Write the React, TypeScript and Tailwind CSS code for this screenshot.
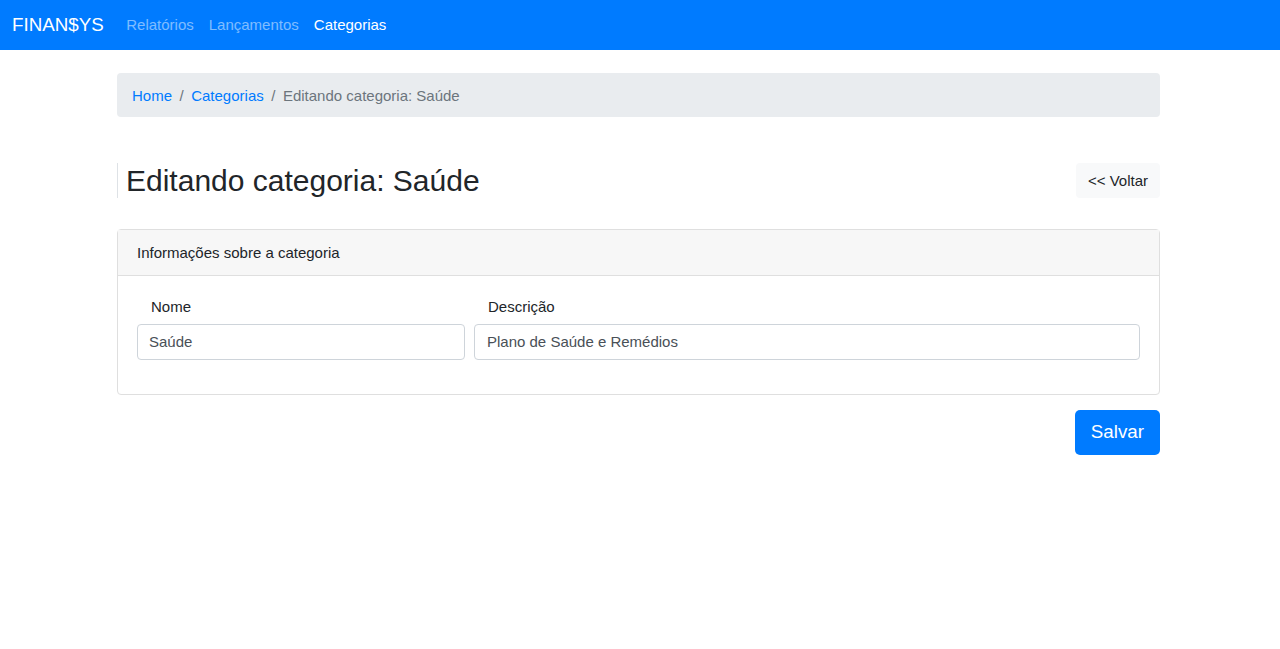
import React from 'react';

export default function App() {
  return (
    <div className="min-h-screen bg-white text-[#212529] text-[15px] leading-[22.5px] font-['Liberation_Sans',Arial,sans-serif]">
      {/* Navbar */}
      <nav className="h-[50px] bg-[#007bff] flex items-center pl-3">
        <span className="text-[18.75px] text-white mr-[15px]">FINAN$YS</span>
        <div className="flex items-center">
          <a className="px-[7.5px] text-white/50">Relatórios</a>
          <a className="px-[7.5px] text-white/50">Lançamentos</a>
          <a className="px-[7.5px] text-white">Categorias</a>
        </div>
      </nav>

      <div className="w-[1043px] ml-[117px]">
        {/* Breadcrumb */}
        <div className="mt-[23px] h-[44px] bg-[#e9ecef] rounded px-[15px] pt-[2px] flex items-center">
          <a className="text-[#007bff]">Home</a>
          <span className="text-[#6c757d] px-[7.5px]">/</span>
          <a className="text-[#007bff]">Categorias</a>
          <span className="text-[#6c757d] px-[7.5px]">/</span>
          <span className="text-[#6c757d]">Editando categoria: Saúde</span>
        </div>

        {/* Header */}
        <div className="mt-[46px] flex items-center justify-between">
          <div className="border-l border-[#dee2e6] pl-2 h-[35px] flex items-center">
            <h1 className="text-[30px] leading-[36px]">Editando categoria: Saúde</h1>
          </div>
          <button className="h-[35px] px-3 pt-[2px] bg-[#f8f9fa] rounded text-[#212529]">&lt;&lt; Voltar</button>
        </div>

        {/* Card */}
        <div className="mt-[31px] border border-[#dfdfdf] rounded">
          <div className="h-[46px] bg-[#f7f7f7] border-b border-[#dfdfdf] px-[19px] pt-[2px] flex items-center">
            Informações sobre a categoria
          </div>
          <div className="px-[19px] pt-[20px] pb-[34px] flex gap-[9px]">
            <div className="w-[328px]">
              <label className="block pl-[14px] mb-[5.5px]">Nome</label>
              <div className="h-[36px] border border-[#ced4da] rounded px-[11px] pt-[1px] flex items-center text-[#495057]">Saúde</div>
            </div>
            <div className="flex-1">
              <label className="block pl-[14px] mb-[5.5px]">Descrição</label>
              <div className="h-[36px] border border-[#ced4da] rounded px-[12px] pt-[1px] flex items-center text-[#495057]">Plano de Saúde e Remédios</div>
            </div>
          </div>
        </div>

        <div className="mt-[15px] flex justify-end">
          <button className="h-[45px] px-4 bg-[#007bff] text-white text-[18.75px] rounded-[5px]">Salvar</button>
        </div>
      </div>
    </div>
  );
}
